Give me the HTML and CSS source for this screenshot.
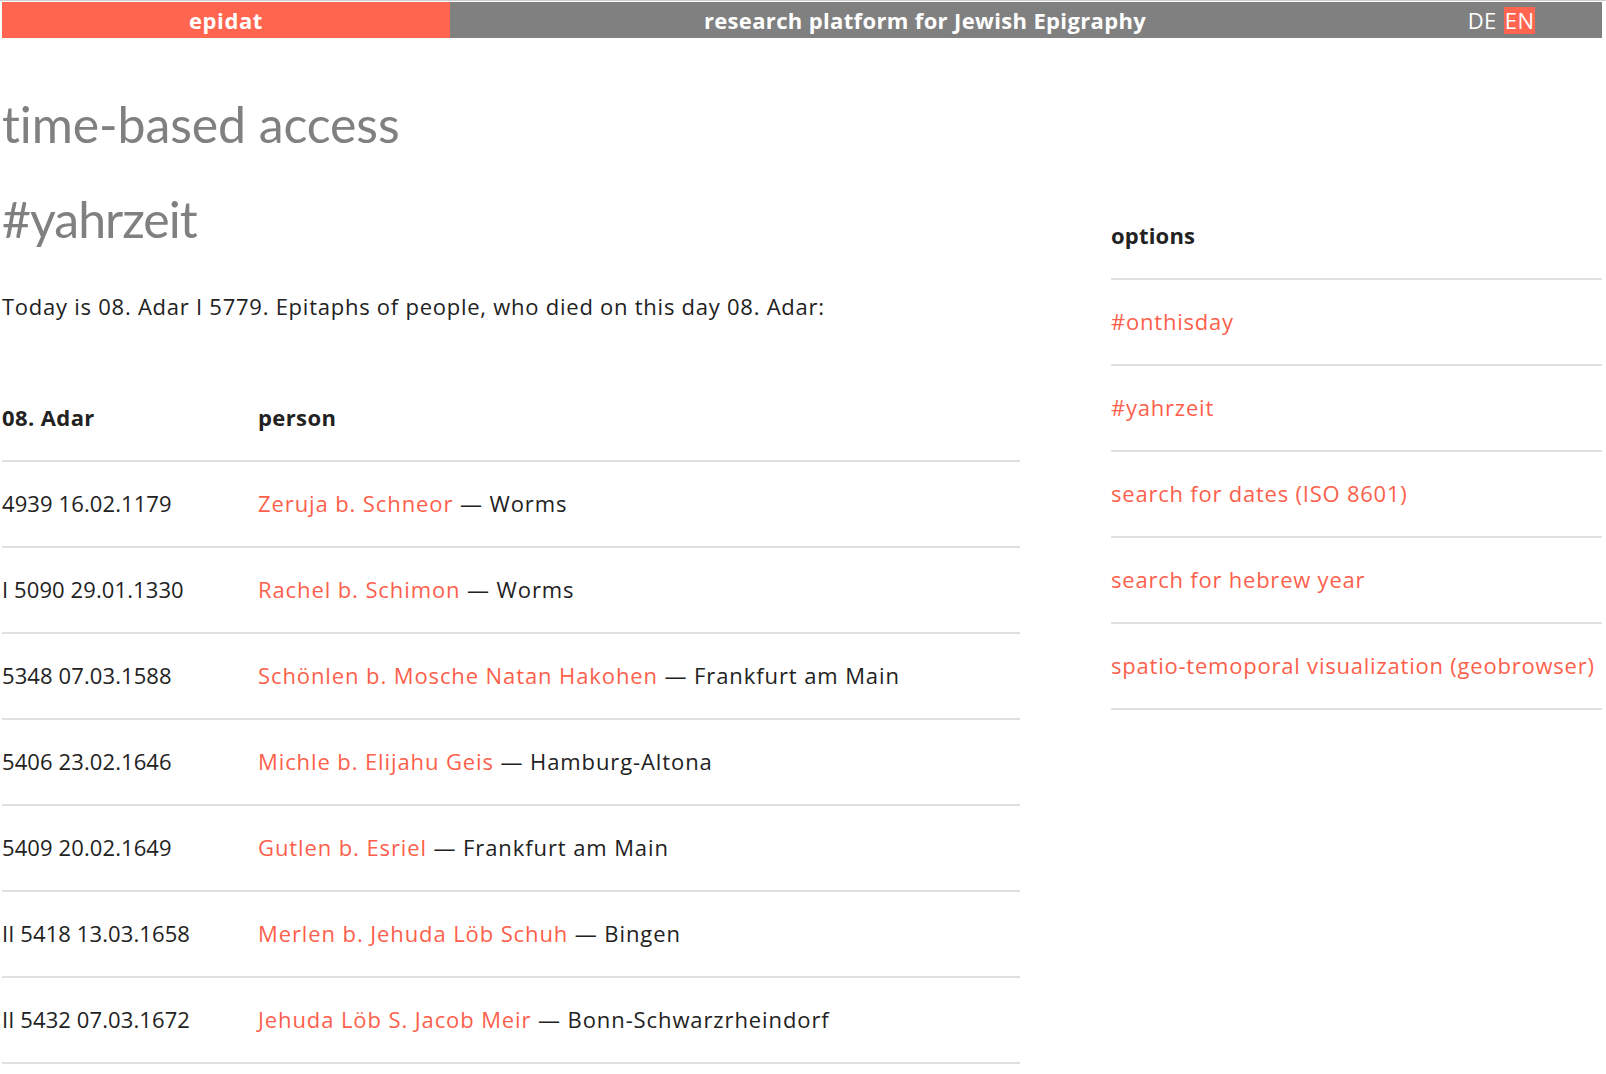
FILE: index.html
```html
<!DOCTYPE html>
<html lang="en">
<head>
<meta charset="utf-8">
<title>epidat – time-based access</title>
<link rel="stylesheet" href="styles.css">
</head>
<body>
<header class="topbar">
  <div class="brand">epidat</div>
  <div class="tagline">research platform for Jewish Epigraphy</div>
  <div class="lang"><span class="lang-item">DE</span> <span class="lang-item active">EN</span></div>
</header>
<main class="page">
  <h1 class="title">time-based access</h1>
  <div class="layout">
    <section class="content">
      <h2 class="subtitle">#yahrzeit</h2>
      <p class="intro">Today is 08. Adar I 5779. Epitaphs of people, who died on this day 08. Adar:</p>
      <table class="list">
        <thead>
          <tr><th class="col-date">08. Adar</th><th>person</th></tr>
        </thead>
        <tbody>
          <tr><td class="col-date date-cell">4939 16.02.1179</td><td><a href="#">Zeruja b. Schneor</a> — Worms</td></tr>
          <tr><td class="col-date date-cell">I 5090 29.01.1330</td><td><a href="#">Rachel b. Schimon</a> — Worms</td></tr>
          <tr><td class="col-date date-cell">5348 07.03.1588</td><td><a href="#">Schönlen b. Mosche Natan Hakohen</a> — Frankfurt am Main</td></tr>
          <tr><td class="col-date date-cell">5406 23.02.1646</td><td><a href="#">Michle b. Elijahu Geis</a> — Hamburg-Altona</td></tr>
          <tr><td class="col-date date-cell">5409 20.02.1649</td><td><a href="#">Gutlen b. Esriel</a> — Frankfurt am Main</td></tr>
          <tr><td class="col-date date-cell">II 5418 13.03.1658</td><td><a href="#">Merlen b. Jehuda Löb Schuh</a> — Bingen</td></tr>
          <tr><td class="col-date date-cell">II 5432 07.03.1672</td><td><a href="#">Jehuda Löb S. Jacob Meir</a> — Bonn-Schwarzrheindorf</td></tr>
        </tbody>
      </table>
    </section>
    <aside class="sidebar">
      <div class="side-head">options</div>
      <ul class="side-list">
        <li><a href="#">#onthisday</a></li>
        <li><a href="#">#yahrzeit</a></li>
        <li><a href="#">search for dates (ISO 8601)</a></li>
        <li><a href="#">search for hebrew year</a></li>
        <li><a href="#">spatio-temoporal visualization (geobrowser)</a></li>
      </ul>
    </aside>
  </div>
</main>
</body>
</html>
```
FILE: styles.css
```css
html, body {
  background: #fff;
}
body {
  margin: 0;
  padding: 0 4px 0 2px;
  font-family: "Open Sans", Lato, sans-serif;
  color: #222;
  border-top: 1px solid #cfcfcf;
}

.topbar {
  margin-top: 1px;
  display: grid;
  grid-template-columns: 448px 950px 1fr;
  height: 36px;
  line-height: 36px;
  font-size: 22px;
  color: #fff;
  background: #808080;
}
.brand {
  background: #ff654f;
  text-align: center;
  font-weight: 700;
  letter-spacing: 0.6px;
}
.tagline {
  text-align: center;
  font-weight: 700;
  letter-spacing: 0.35px;
}
.lang {
  text-align: center;
  letter-spacing: 0.4px;
}
.lang-item {
  display: inline-block;
  line-height: 27px;
  padding: 0 1px;
}
.lang-item.active {
  background: #ff654f;
}

.page {
  display: block;
}
.title {
  margin: 59px 0 0;
  font-family: Lato, sans-serif;
  font-size: 50px;
  line-height: 55px;
  font-weight: 400;
  color: #808080;
  letter-spacing: -0.1px;
}
.layout {
  display: flex;
  gap: 91px;
}
.content {
  width: 1018px;
  flex: none;
}
.subtitle {
  margin: 40px 0 0;
  font-family: Lato, sans-serif;
  font-size: 50px;
  line-height: 55px;
  font-weight: 400;
  color: #808080;
  letter-spacing: -1px;
}
.intro {
  margin: 43px 0 0;
  font-size: 22px;
  line-height: 33px;
  letter-spacing: 0.75px;
}

.list {
  margin-top: 53px;
  width: 100%;
  border-collapse: collapse;
  font-size: 22px;
  line-height: 33px;
  letter-spacing: 0.9px;
}
.list th, .list td {
  text-align: left;
  padding: 25px 0 26px;
  border-bottom: 2px solid #e0e0e0;
  vertical-align: top;
}
.list th {
  font-weight: 700;
  letter-spacing: 0.4px;
}
.col-date {
  width: 256px;
}
.date-cell {
  letter-spacing: 0.1px;
}
a {
  color: #fd5f4c;
  text-decoration: none;
}

.sidebar {
  flex: 1;
  margin-top: 42px;
  font-size: 22px;
  line-height: 33px;
  letter-spacing: 0.78px;
}
.side-head {
  font-weight: 700;
  letter-spacing: 0.2px;
  padding: 25px 0 26px;
  border-bottom: 2px solid #e0e0e0;
}
.side-list {
  list-style: none;
  margin: 0;
  padding: 0;
}
.side-list li {
  padding: 25px 0 26px;
  border-bottom: 2px solid #e0e0e0;
  white-space: nowrap;
}
```
